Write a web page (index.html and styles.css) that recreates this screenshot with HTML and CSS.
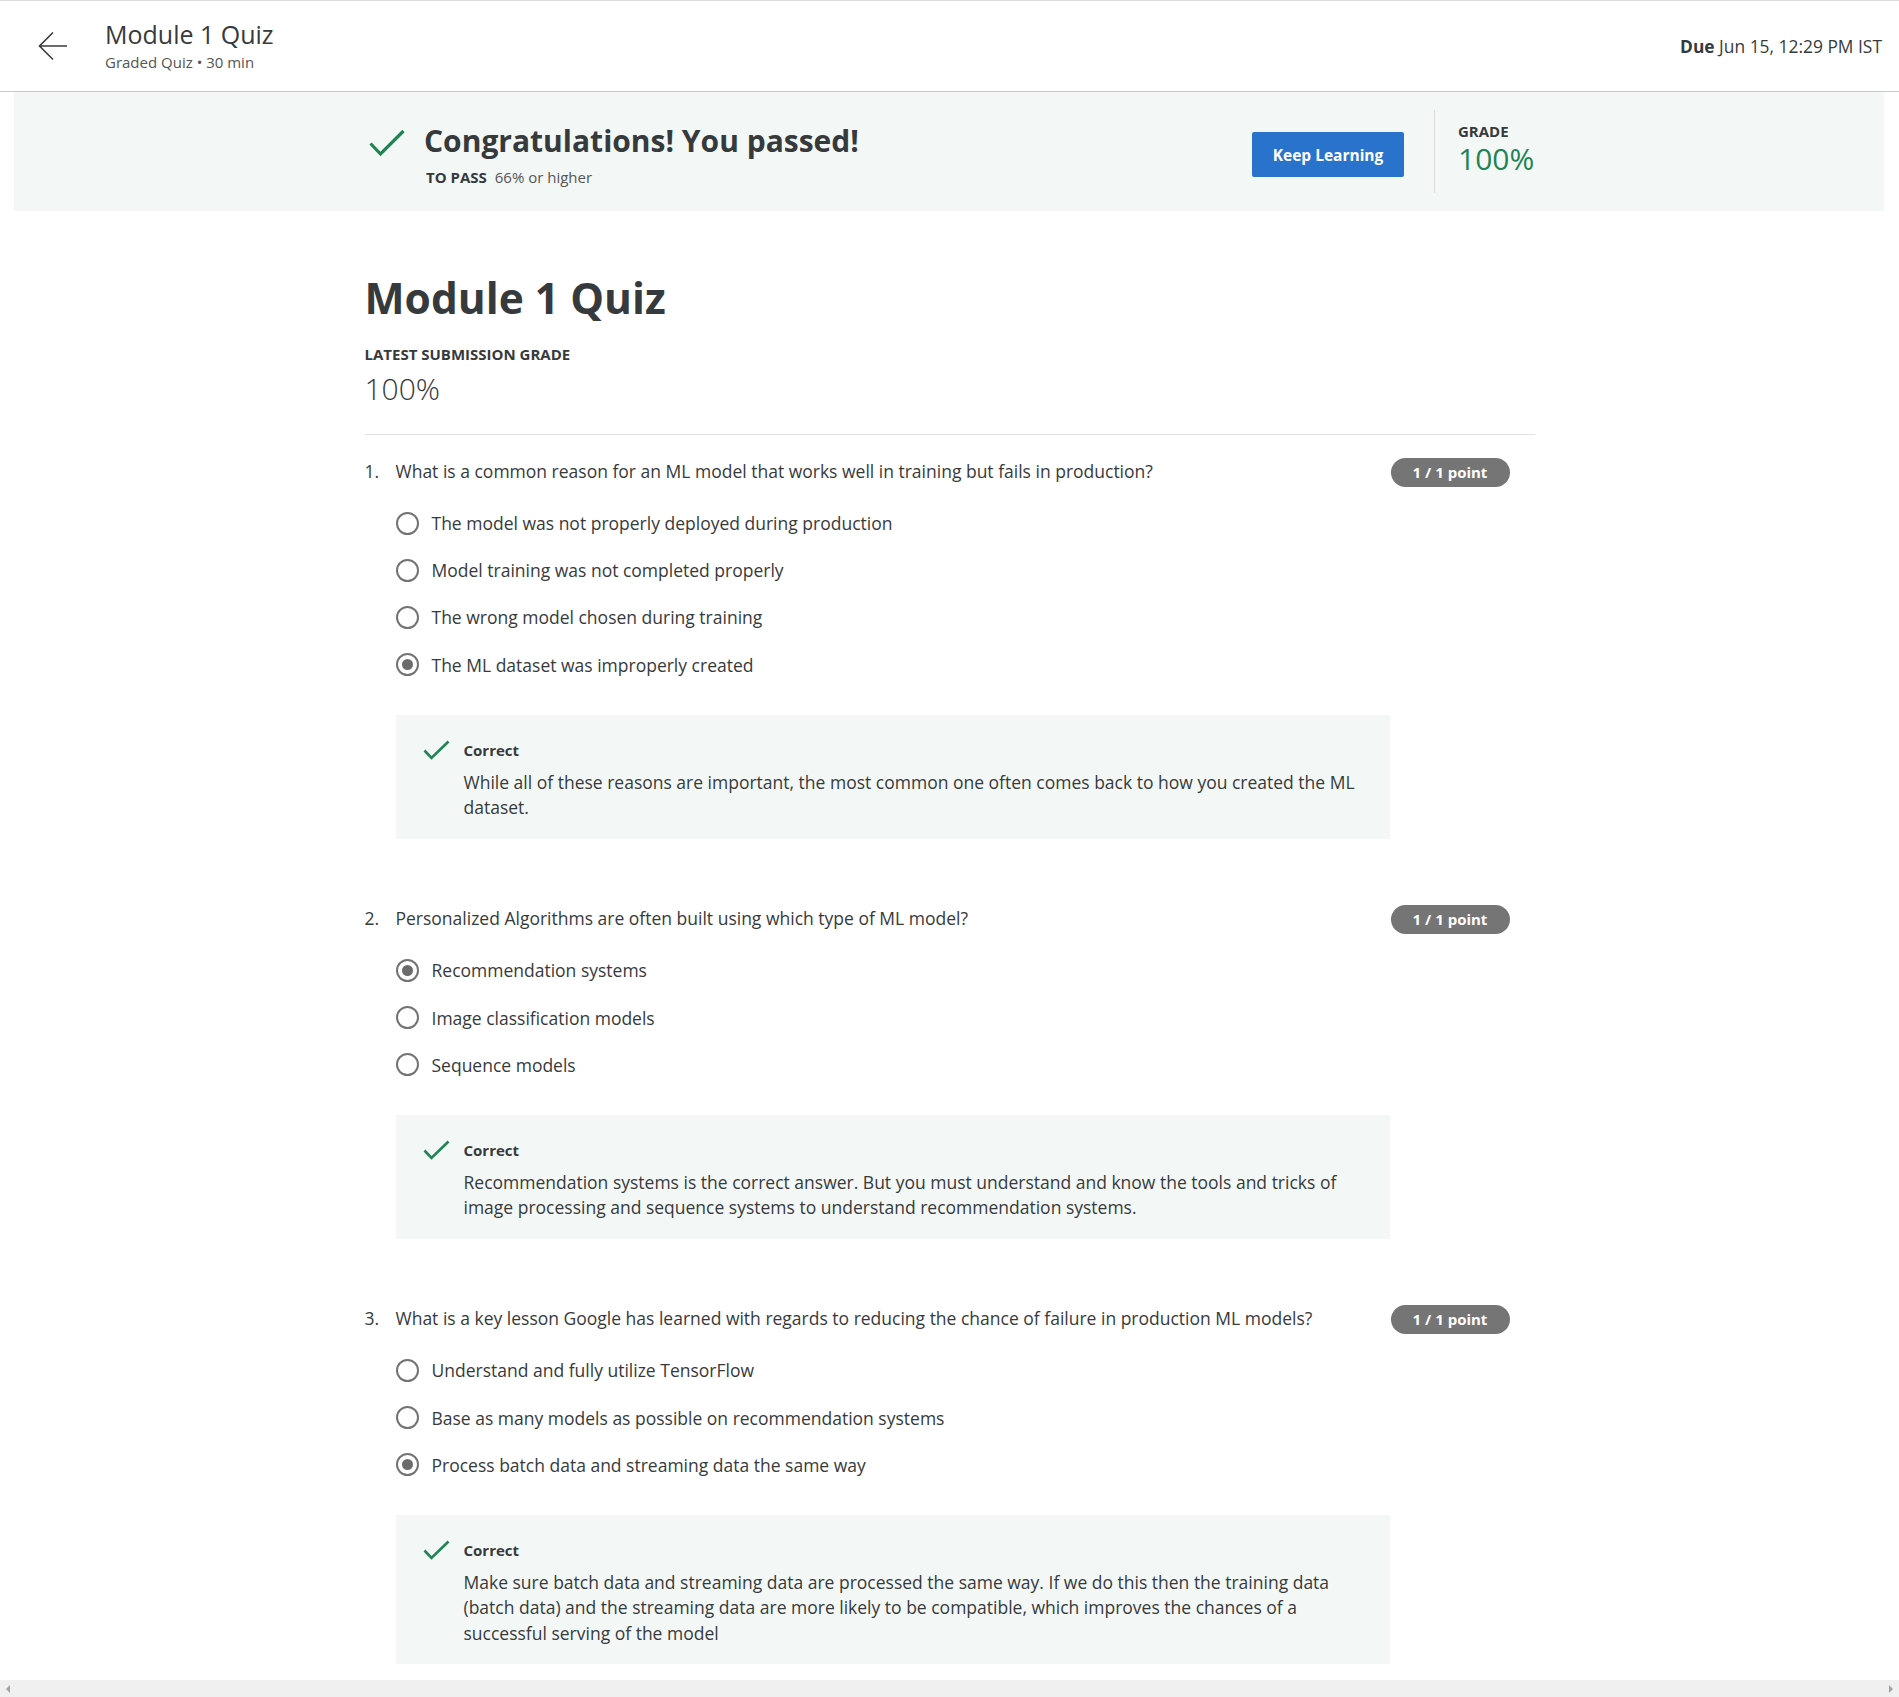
FILE: index.html
```html
<!DOCTYPE html>
<html lang="en">
<head>
<meta charset="utf-8">
<title>Module 1 Quiz</title>
<link rel="stylesheet" href="styles.css">
</head>
<body>
<header class="topbar">
  <svg class="back" width="30" height="30" viewBox="0 0 30 30"><path d="M29 15H2M15 1.5L1.5 15L15 28.5" fill="none" stroke="#3b3b3b" stroke-width="1.6"/></svg>
  <div class="top-title">
    <div class="top-name">Module 1 Quiz</div>
    <div class="top-sub">Graded Quiz • 30 min</div>
  </div>
  <div class="due"><b>Due</b> Jun 15, 12:29 PM IST</div>
</header>

<section class="banner">
  <div class="banner-inner">
    <svg class="banner-check" width="36" height="28" viewBox="0 0 36 28"><path d="M1.5 14.5L11.5 25L34.5 2" fill="none" stroke="#1f8354" stroke-width="3.2"/></svg>
    <div class="banner-text">
      <div class="banner-title">Congratulations! You passed!</div>
      <div class="banner-pass"><b>TO PASS</b> 66% or higher</div>
    </div>
    <div class="banner-right">
      <button class="keep">Keep Learning</button>
      <div class="vdiv"></div>
      <div class="grade">
        <div class="grade-label">GRADE</div>
        <div class="grade-value">100%</div>
      </div>
    </div>
  </div>
</section>

<main class="content">
  <h1 class="quiz-title">Module 1 Quiz</h1>
  <div class="latest-label">LATEST SUBMISSION GRADE</div>
  <div class="latest-value">100%</div>
  <hr class="rule">

  <div class="question">
    <div class="q-row">
      <span class="q-num">1.</span>
      <span class="q-text">What is a common reason for an ML model that works well in training but fails in production?</span>
      <span class="badge">1 / 1 point</span>
    </div>
    <div class="options">
      <div class="opt"><span class="radio"></span>The model was not properly deployed during production</div>
      <div class="opt"><span class="radio"></span>Model training was not completed properly</div>
      <div class="opt"><span class="radio"></span>The wrong model chosen during training</div>
      <div class="opt"><span class="radio on"></span>The ML dataset was improperly created</div>
    </div>
    <div class="feedback">
      <div class="fb-head">
        <svg class="fb-check" width="27" height="20" viewBox="0 0 27 20"><path d="M1.5 10.5L8.5 18L25.5 1.5" fill="none" stroke="#1f8354" stroke-width="2.6"/></svg>
        <span class="fb-label">Correct</span>
      </div>
      <p class="fb-body">While all of these reasons are important, the most common one often comes back to how you created the ML dataset.</p>
    </div>
  </div>

  <div class="question">
    <div class="q-row">
      <span class="q-num">2.</span>
      <span class="q-text">Personalized Algorithms are often built using which type of ML model?</span>
      <span class="badge">1 / 1 point</span>
    </div>
    <div class="options">
      <div class="opt"><span class="radio on"></span>Recommendation systems</div>
      <div class="opt"><span class="radio"></span>Image classification models</div>
      <div class="opt"><span class="radio"></span>Sequence models</div>
    </div>
    <div class="feedback">
      <div class="fb-head">
        <svg class="fb-check" width="27" height="20" viewBox="0 0 27 20"><path d="M1.5 10.5L8.5 18L25.5 1.5" fill="none" stroke="#1f8354" stroke-width="2.6"/></svg>
        <span class="fb-label">Correct</span>
      </div>
      <p class="fb-body">Recommendation systems is the correct answer. But you must understand and know the tools and tricks of image processing and sequence systems to understand recommendation systems.</p>
    </div>
  </div>

  <div class="question">
    <div class="q-row">
      <span class="q-num">3.</span>
      <span class="q-text">What is a key lesson Google has learned with regards to reducing the chance of failure in production ML models?</span>
      <span class="badge">1 / 1 point</span>
    </div>
    <div class="options">
      <div class="opt"><span class="radio"></span>Understand and fully utilize TensorFlow</div>
      <div class="opt"><span class="radio"></span>Base as many models as possible on recommendation systems</div>
      <div class="opt"><span class="radio on"></span>Process batch data and streaming data the same way</div>
    </div>
    <div class="feedback">
      <div class="fb-head">
        <svg class="fb-check" width="27" height="20" viewBox="0 0 27 20"><path d="M1.5 10.5L8.5 18L25.5 1.5" fill="none" stroke="#1f8354" stroke-width="2.6"/></svg>
        <span class="fb-label">Correct</span>
      </div>
      <p class="fb-body">Make sure batch data and streaming data are processed the same way. If we do this then the training data (batch data) and the streaming data are more likely to be compatible, which improves the chances of a successful serving of the model</p>
    </div>
  </div>
</main>

<div class="hscroll">
  <span class="arr left"></span>
  <span class="arr right"></span>
</div>
</body>
</html>
```

FILE: styles.css
```css
html, body {
  margin: 0;
  padding: 0;
  background: #fff;
  overflow: hidden;
}
body {
  font-family: "Open Sans", "Noto Sans", sans-serif;
  color: #333;
  height: 1697px;
}

/* top bar */
.topbar {
  display: flex;
  align-items: center;
  height: 90px;
  border-top: 1px solid #dcdcdc;
  border-bottom: 1px solid #c8c8c8;
  padding: 0 17px 0 38px;
}
.back { flex: none; }
.top-title { margin-left: 37px; margin-top: -1px; }
.top-name { font-size: 25px; line-height: 30px; color: #373a3c; }
.top-sub { font-size: 15px; line-height: 20px; color: #555; margin-top: 3px; }
.due { margin-left: auto; font-size: 17.4px; color: #373a3c; }
.due b { font-weight: 700; }

/* banner */
.banner {
  margin: 0 15px 0 14px;
  height: 119px;
  background: #f3f8f6;
  display: flex;
  align-items: center;
}
.banner-inner {
  width: 1170px;
  margin: 0 auto;
  display: flex;
  align-items: center;
}
.banner-check { margin-left: 5px; margin-top: -18px; flex: none; }
.banner-text { margin-left: 19px; margin-top: 4px; }
.banner-title { font-size: 30px; font-weight: 700; line-height: 40px; color: #373a3c; }
.banner-pass { font-size: 15px; line-height: 20px; color: #555; margin-top: 6px; padding-left: 2px; }
.banner-pass b { color: #373a3c; margin-right: 4px; }
.banner-right {
  margin-left: auto;
  display: flex;
  align-items: center;
}
.keep {
  width: 152px;
  height: 45px;
  border: none;
  border-radius: 2px;
  background: #2a73cc;
  color: #fff;
  font-family: inherit;
  font-size: 15.5px;
  font-weight: 700;
  padding: 0;
  margin-top: 6px;
}
.vdiv {
  width: 1px;
  height: 83px;
  background: #dcdcdc;
  margin: 0 23px 0 30px;
}
.grade { width: 76px; margin-top: -5px; }
.grade-label { font-size: 15px; font-weight: 700; line-height: 20px; color: #373a3c; }
.grade-value { font-size: 30px; line-height: 36px; color: #1f8354; font-weight: 400; }

/* content */
.content {
  width: 1170px;
  margin: 0 auto;
  padding-top: 62px;
}
.quiz-title {
  margin: 0;
  font-size: 42.5px;
  line-height: 50px;
  font-weight: 700;
  color: #373a3c;
}
.latest-label {
  margin-top: 21px;
  font-size: 15px;
  line-height: 20px;
  font-weight: 700;
  color: #373a3c;
}
.latest-value {
  margin-top: 7px;
  font-size: 30px;
  line-height: 36px;
  font-weight: 300;
  color: #373a3c;
}
.rule {
  margin: 27px 0 0;
  border: none;
  border-top: 1px solid #e1e1e1;
}

.question { margin-top: 20.5px; }
.question + .question { margin-top: 64px; }
.q-row {
  display: flex;
  align-items: center;
  height: 31px;
  font-size: 17.5px;
  line-height: 24px;
  color: #373a3c;
}
.q-num { width: 31px; flex: none; }
.q-text { flex: 1; }
.badge {
  flex: none;
  width: 119px;
  height: 29px;
  border-radius: 15px;
  background: #757575;
  color: #fff;
  font-size: 15px;
  font-weight: 700;
  line-height: 29px;
  text-align: center;
  margin-right: 25px;
  margin-top: 2px;
}

.options { margin-top: 13px; padding-left: 31px; }
.opt {
  display: flex;
  align-items: center;
  height: 47.2px;
  font-size: 17.5px;
  color: #373a3c;
}
.radio {
  flex: none;
  width: 19px;
  height: 19px;
  border: 2px solid #737373;
  border-radius: 50%;
  margin-right: 13px;
  position: relative;
  box-sizing: content-box;
}
.radio.on::after {
  content: "";
  position: absolute;
  left: 4px;
  top: 4px;
  width: 11px;
  height: 11px;
  border-radius: 50%;
  background: #6b6b6b;
}

.feedback {
  margin: 27px 145px 0 31px;
  background: #f3f8f6;
  padding: 25px 28px 18px 27px;
}
.fb-head { display: flex; align-items: center; height: 20px; }
.fb-check { flex: none; }
.fb-label {
  margin-left: 14px;
  font-size: 15px;
  font-weight: 700;
  line-height: 20px;
  color: #373a3c;
}
.fb-body {
  margin: 9.5px 0 0 41px;
  font-size: 17.5px;
  line-height: 25.5px;
  color: #373a3c;
}

/* browser horizontal scrollbar look */
.hscroll {
  position: fixed;
  left: 0;
  right: 0;
  bottom: 0;
  height: 17px;
  background: #f0f0f0;
}
.arr {
  position: absolute;
  top: 5px;
  width: 0;
  height: 0;
  border-top: 4px solid transparent;
  border-bottom: 4px solid transparent;
}
.arr.left { left: 6px; border-right: 4px solid #a3a3a3; }
.arr.right { right: 6px; border-left: 4px solid #a3a3a3; }
```
